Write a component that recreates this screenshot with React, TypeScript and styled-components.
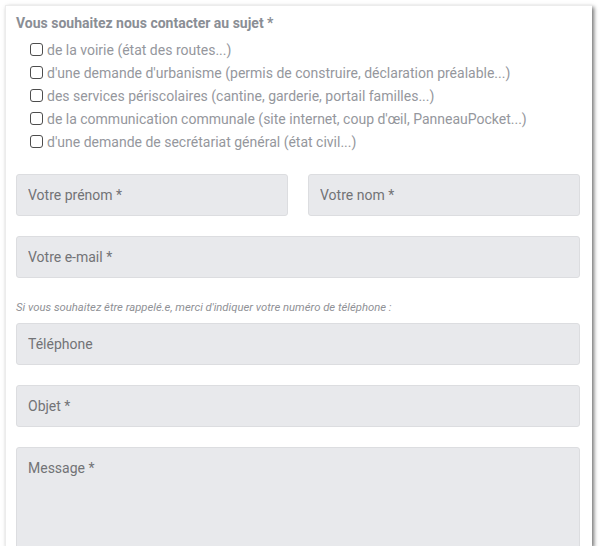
import * as React from 'react';
import styled, { createGlobalStyle } from 'styled-components';

const GlobalStyle = createGlobalStyle`
  html, body {
    margin: 0;
    padding: 0;
    background: #fff;
  }
  body {
    font-family: Roboto, 'Liberation Sans', Arial, sans-serif;
  }
`;

const Panel = styled.div`
  box-sizing: border-box;
  margin: 5px 0 0 5px;
  width: 587px;
  height: 541px;
  overflow: hidden;
  background: #fff;
  border-top: 1px solid #ececec;
  border-left: 1px solid #ececec;
  box-shadow: 2px 2px 4px rgba(0, 0, 0, 0.55);
  padding: 7px 12px 0 10px;
`;

const Title = styled.div`
  font-size: 14px;
  font-weight: 700;
  line-height: 20px;
  color: #8a8e95;
`;

const Choices = styled.div`
  display: flex;
  flex-direction: column;
  margin: 5px 0 0 14px;
`;

const Choice = styled.label`
  display: flex;
  align-items: center;
  gap: 4px;
  height: 23px;
  font-size: 14px;
  color: #95979d;
  white-space: nowrap;
`;

const Box = styled.span`
  box-sizing: border-box;
  width: 13px;
  height: 13px;
  border: 1px solid #4d4d4d;
  border-radius: 3px;
  flex: none;
`;

const Fields = styled.div`
  display: flex;
  flex-direction: column;
  gap: 20px;
  margin-top: 21px;
`;

const Row = styled.div`
  display: grid;
  grid-template-columns: 1fr 1fr;
  gap: 20px;
`;

const Field = styled.input`
  box-sizing: border-box;
  width: 100%;
  height: 42px;
  margin: 0;
  padding: 0 11px;
  background: #e8e9ec;
  border: 1px solid #dcdde0;
  border-radius: 3px;
  font-family: Roboto, 'Liberation Sans', Arial, sans-serif;
  font-size: 14px;
  color: #555;
  outline: none;
  &::placeholder {
    color: #727376;
  }
`;

const Area = styled.textarea`
  box-sizing: border-box;
  width: 100%;
  height: 160px;
  margin: 0;
  padding: 11px 11px;
  background: #e8e9ec;
  border: 1px solid #dcdde0;
  border-radius: 3px;
  font-family: Roboto, 'Liberation Sans', Arial, sans-serif;
  font-size: 14px;
  line-height: 18px;
  resize: none;
  outline: none;
  display: block;
  &::placeholder {
    color: #727376;
  }
`;

const PhoneGroup = styled.div`
  display: flex;
  flex-direction: column;
  gap: 8px;
  margin-top: 2px;
`;

const Hint = styled.div`
  font-size: 11.3px;
  font-style: italic;
  line-height: 15px;
  color: #8f9196;
`;

const subjects = [
  'de la voirie (état des routes...)',
  "d'une demande d'urbanisme (permis de construire, déclaration préalable...)",
  'des services périscolaires (cantine, garderie, portail familles...)',
  "de la communication communale (site internet, coup d'œil, PanneauPocket...)",
  "d'une demande de secrétariat général (état civil...)",
];

const App: React.FC = () => {
  return (
    <>
      <GlobalStyle />
      <Panel>
        <Title>Vous souhaitez nous contacter au sujet *</Title>
        <Choices>
          {subjects.map((s) => (
            <Choice key={s}>
              <Box />
              {s}
            </Choice>
          ))}
        </Choices>
        <Fields>
          <Row>
            <Field placeholder='Votre prénom *' />
            <Field placeholder='Votre nom *' />
          </Row>
          <Field placeholder='Votre e-mail *' />
          <PhoneGroup>
            <Hint>
              Si vous souhaitez être rappelé.e, merci d'indiquer votre numéro de téléphone :
            </Hint>
            <Field placeholder='Téléphone' />
          </PhoneGroup>
          <Field placeholder='Objet *' />
          <Area placeholder='Message *' />
        </Fields>
      </Panel>
    </>
  );
};

export default App;
